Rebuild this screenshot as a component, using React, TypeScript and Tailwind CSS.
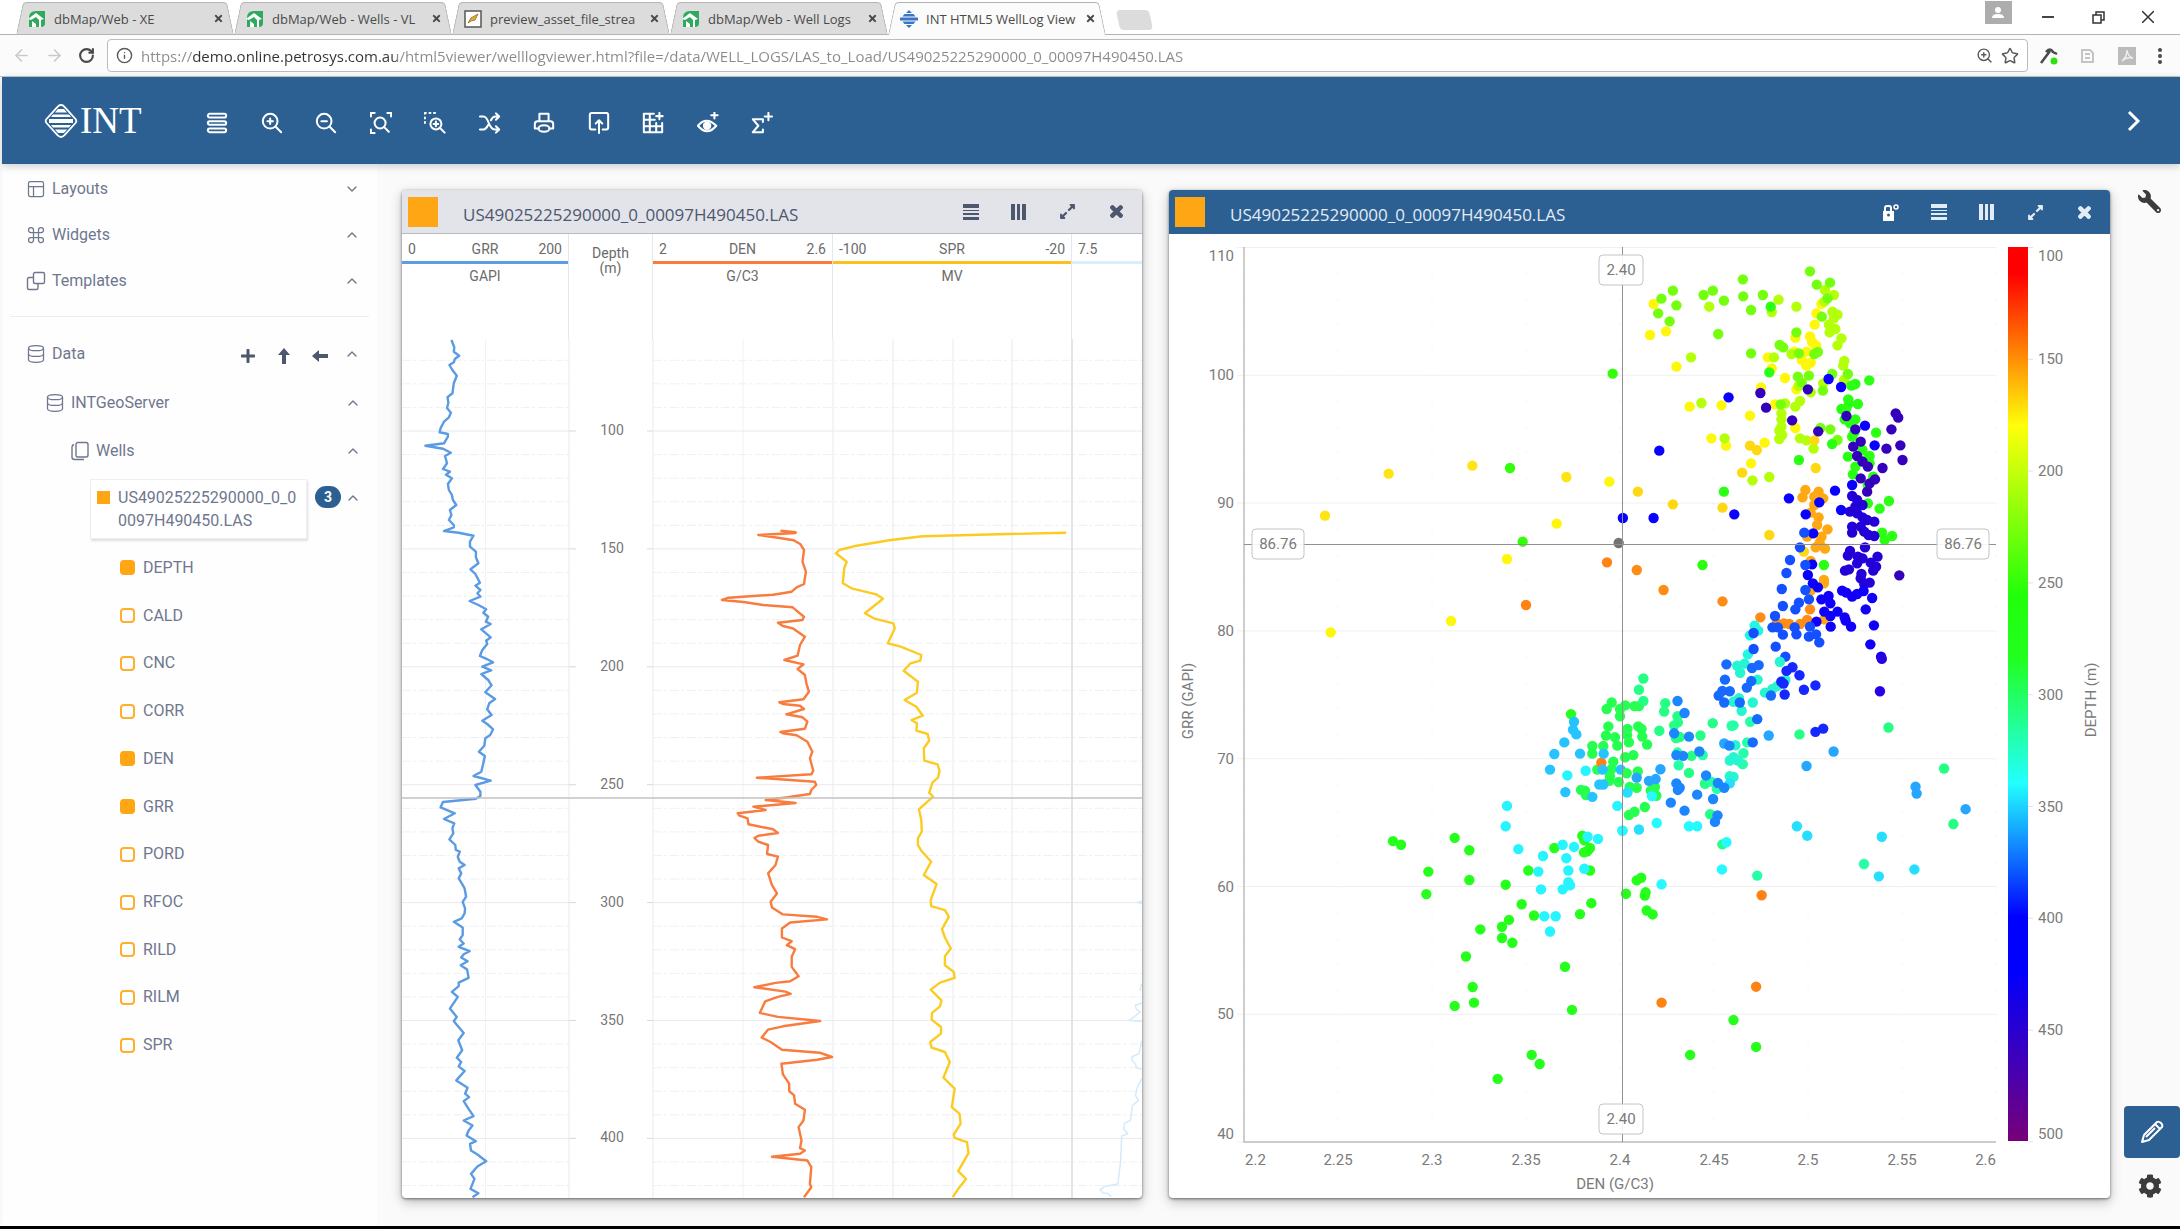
import React, { useState } from "react";
import { ChevronDown, ChevronUp, Command, Database, PanelsTopLeft, Info, ArrowLeft, ArrowRight, RotateCw, ZoomIn, Star } from "lucide-react";
import { FaPlus, FaTimes, FaExpandAlt, FaWrench, FaCog } from "react-icons/fa";

const WELL = "US49025225290000_0_00097H490450.LAS";
const URL_TEXT = "https://demo.online.petrosys.com.au/html5viewer/welllogviewer.html?file=/data/WELL_LOGS/LAS_to_Load/US49025225290000_0_00097H490450.LAS";

/* ---------- digitised data ---------- */

// A tile holds points in its own units, placed on the chart by origin and scale
interface Tile {
  ox: number;
  oy: number;
  sx: number;
  sy: number;
}

const LOG_TOP: Tile = { ox: -12, oy: -159, sx: 2.0364, sy: 3 };
const LOG_MID: Tile = { ox: -12, oy: 161, sx: 2.0364, sy: 3 };
const LOG_END: Tile = { ox: -12, oy: 511, sx: 2.0364, sy: 2.995 };

const place = (tile: Tile, points: string): [number, number][] =>
  points.split(" ").map((p) => {
    const [x, y] = p.split(",").map(Number);
    return [x / tile.sx + tile.ox, y / tile.sy + tile.oy];
  });

const curve = (...parts: [Tile, string][]) =>
  parts
    .flatMap(([tile, points]) => place(tile, points))
    .map(([x, y]) => `${x.toFixed(1)},${y.toFixed(1)}`)
    .join(" ");

const GRR = curve(
  [LOG_TOP, "125,480 131,502 130,515 141,527 132,537 130,547 121,555 127,570 136,587 130,610 127,640 117,652 119,668 116,684 124,698 120,712 110,725 103,745 101,757 118,762 118,770 110,790 72,797 108,806 124,818 112,828 116,850 108,867 122,875 114,884 126,895 118,912 120,930 126,945 128,960 135,975 122,990 125,1005 120,1020 130,1035 130,1042"],
  [LOG_MID, "110,93 140,98 170,107 163,125 163,140 175,155 175,172 180,190 164,208 174,222 183,248 174,257 184,270 178,280 184,290 162,303 180,315 196,328 190,338 200,350 195,365 205,372 186,388 205,412 196,422 198,432 188,450 183,468 194,475 210,487 188,500 206,511 186,522 200,540 207,556 194,577 214,597 202,610 198,628 207,645 188,662 198,672 210,688 204,705 194,715 192,737 181,755 193,768 190,790 186,815 170,828 205,842 174,855 184,875 184,888 175,896 108,906 103,922 132,940 110,957 131,970 127,985 129,1000 121,1018 133,1035 134,1050"],
  [LOG_END, "142,5 138,20 142,35 152,45 140,55 145,70 140,85 147,102 152,115 155,140 148,155 153,175 152,190 146,205 130,215 148,232 148,255 142,268 150,280 140,290 162,303 150,312 145,322 158,333 144,345 157,358 160,383 140,397 140,408 126,425 138,440 130,458 122,475 136,500 130,513 150,548 139,570 143,585 147,600 136,622 145,635 140,648 152,662 135,690 158,712 153,730 161,740 150,752 160,775 170,797 150,810 168,825 160,840 156,855 175,872 163,880 165,900 178,912 196,932 178,948 165,970 172,985 168,1000 164,1015 180,1028 168,1040"]
);

const DEN = curve(
  [LOG_MID, "795,92 826,97 826,99 750,105 790,113 822,121 836,133 843,150 840,185 847,215 843,252 828,262 818,275 780,284 690,293 676,300 720,306 760,315 820,322 832,337 843,350 840,360 790,368 800,378 820,385 845,410 835,435 830,467 803,480 842,493 830,507 845,525 848,550 853,575 842,598 793,607 800,612 835,617 843,627 807,643 840,652 850,665 845,686 795,696 800,700 828,706 850,725 860,755 855,775 862,812 858,823 747,833 865,845 868,855 858,870 855,882 810,892 765,900 826,909 740,920 765,930 708,940 712,947 728,955 730,973 780,988 790,999 750,1007 742,1014 750,1025 770,1035 768,1060"],
  [LOG_END, "768,12 790,20 785,45 770,70 778,105 788,130 775,155 778,172 800,193 870,200 890,208 815,217 798,235 798,262 818,273 808,285 825,297 818,320 818,350 832,378 815,393 785,398 742,411 805,424 816,431 790,440 764,453 753,488 790,500 876,512 800,528 770,538 757,562 775,575 798,598 875,607 900,620 870,628 797,640 800,672 813,700 813,722 823,735 825,760 845,778 842,810 832,830 838,870 835,893 845,900 835,910 778,919 850,930 858,950 855,1000 858,1010 843,1040"]
);

const SPR = curve(
  [LOG_MID, "1377,98 1200,104 1085,109 1020,120 950,137 915,150 908,160 930,185 925,205 922,250 940,265 990,283 1004,296 967,340 985,355 1025,370 1028,385 1014,430 1040,440 1082,465 1080,482 1060,490 1046,512 1075,545 1073,578 1048,600 1072,620 1085,647 1062,660 1073,670 1072,692 1095,702 1098,722 1087,745 1088,782 1115,793 1119,812 1116,833 1105,847 1098,878 1106,890 1077,928 1082,960 1083,995 1075,1015 1075,1035"],
  [LOG_END, "1082,2 1102,35 1087,75 1113,102 1101,150 1102,168 1130,180 1138,200 1124,237 1130,262 1142,295 1130,318 1130,345 1148,365 1150,383 1120,397 1101,418 1123,450 1120,468 1104,488 1103,508 1122,530 1122,550 1100,575 1103,592 1130,605 1140,635 1127,682 1150,715 1144,770 1160,790 1162,820 1148,852 1150,862 1175,875 1178,908 1157,962 1173,985 1158,1013 1146,1040"]
);

const PORD = [
  curve([LOG_END, "1531,153 1522,157 1531,161"]),
  curve([LOG_END, "1531,400 1527,422"]),
  curve([LOG_END, "1531,458 1518,465 1520,478 1528,485 1515,500 1505,510 1531,514"]),
  curve([LOG_END, "1531,572 1525,610 1510,620 1512,632 1518,640 1520,652 1531,657"]),
  curve([LOG_END, "1531,685 1522,710 1518,735 1524,750 1512,765 1508,810 1496,818 1494,835 1502,850 1490,857 1488,930 1482,1000 1455,1008 1446,1018 1452,1027 1462,1029 1468,1038"]),
];

const SCATTER: { tile: Tile; dots: [string, string][] }[] = [
  {
    tile: { ox: -9, oy: -4, sx: 3, sy: 3 },
    dots: [
      ["#ffe414", "495,857 686,731 937,707 1219,741"],
      ["#fff70a", "1348,755 1190,881 1041,987 873,1173 512,1207"],
      ["#33ff0d", "1358,431 1050,714 1088,935"],
      ["#ff8314", "1341,997 1098,1125"],
      ["#6f756f", "1376,939"],
    ],
  },
  {
    tile: { ox: 431, oy: -4, sx: 2.8, sy: 3 },
    dots: [
      ["#fff70a", "150,222 185,304 140,315 214,410 470,382 481,415 518,444 550,478 451,472 251,530 340,526 420,557 312,625 353,647 461,638 547,594 423,700 606,250 601,284 620,222 588,319 547,323 594,336 605,346 579,365 545,365 565,390 590,398 578,407 490,523"],
      ["#b4ff0a", "306,230 500,209 481,246 550,230 255,382 487,382 284,519 651,245 665,254 655,265 641,284 659,297 643,307 676,325 665,346 684,393 681,407 683,450 625,460 536,372 560,513 547,530 590,487 518,520 508,550 508,568 508,590 502,602 510,615 502,627 560,625 578,631 598,656 349,625 427,751 474,741 556,468 630,180 655,195 628,215"],
      ["#73ff0d", "588,124 400,148 204,182 172,206 214,226 316,182 290,195 401,199 456,195 347,212 163,250 195,274 423,240 331,312 607,164 644,158 637,205 621,260 550,307 503,345 513,352 423,370 557,370 600,372 610,366 554,440 565,458 585,437 650,432 624,482 645,598 617,594 665,630 506,523 694,432"],
      ["#ffd814", "420,647 439,660 398,728 106,785 204,823 343,833 474,915 600,631 604,714 571,965"],
      ["#ffa814", "575,780 567,802 612,785 625,805 600,800 600,825 590,848 612,862 608,885 637,898 620,920 580,920 604,952 630,956 615,938 590,993 627,1050 627,1060 590,1082 628,1168"],
      ["#ff8c14", "103,1020 178,1080 343,1114 449,1162 588,1138 495,1180 515,1180 530,1182 560,1182 580,1170"],
      ["#2bff14", "754,451 773,608 715,462 704,467 695,508 722,522 676,537 697,520 690,535 715,568 685,568 700,580 712,608 706,620 650,642 735,660 755,678 694,680 745,690 755,700 715,710 708,733 765,740 750,765 557,690 347,785 809,813 783,836 790,908 818,918 797,930 627,1005 287,1005 478,230 474,427 750,820"],
      ["#3500bb", "449,489 465,533 538,571 582,478 611,604 690,558 715,598 828,550 835,563 816,598 841,646 802,656 847,690 791,714 730,635 709,650 720,678 735,695 750,710 730,745 770,748 755,760 748,785 838,1036"],
      ["#0a00ff", "360,502 166,662 64,864 150,864 376,853 529,805 658,782 614,817 576,853 675,840 706,765 640,447 675,471 597,910 742,587 769,646 582,1035 594,1003 596,1060 610,1072"],
      ["#2400d8", "706,798 720,810 735,825 715,830 700,845 720,850 735,862 748,870 768,875 706,890 706,908 730,890 740,905 752,915 768,918 742,952 700,963 694,977 722,980 735,985 720,1000 777,980 758,998 773,1010 765,1022 686,1022 697,1018 732,1032 730,1045 755,1058 740,1062"],
      ["#1000fa", "678,1082 690,1088 706,1100 720,1092 738,1083 762,1104 744,1138 767,1186 757,1243 787,1280 640,1098 620,1108 645,1120 628,1145 665,1145 645,1158 685,1162 688,1172 703,1190 646,1190 606,1175"],
      ["#23f5e0", "433,1187 443,1202 420,1216 414,1273"],
      ["#1450ff", "572,908 560,952 532,990 575,1005 522,1029 509,1077 575,1080 585,1108 557,1118 547,1138 512,1128 490,1158 483,1192 498,1192 512,1214 545,1192 550,1213 588,1190 585,1220 605,1213 614,1237 492,1250 519,1280 430,1209 430,1257"],
    ],
  },
  {
    tile: { ox: -9, oy: 426, sx: 3, sy: 2.755 },
    dots: [
      ["#26ff50", "1297,237 1297,258 1263,358 1275,360 1278,372 1330,237 1355,117 1340,135 1345,183 1338,208 1365,213 1372,236 1380,155 1380,135 1360,280 1350,320 1348,333 1376,336 1312,302 1355,300"],
      ["#26ff1c", "699,499 723,509 884,490 928,524 928,606 805,583 799,645 1037,619 1105,580 1085,673 1122,704 1047,716 1026,735 1026,766 1057,779 961,742 918,817 938,901 942,944 884,953 1215,845 1236,964 1115,1088 1139,1113 1013,1154 1294,670 1260,700 1233,149 1183,518 1267,484 1273,497 1290,518 1272,530 1290,580 1282,527"],
      ["#ff8314", "1324,283"],
      ["#26c4ff", "1242,170 1239,192 1249,205 1213,227 1183,259 1170,302 1216,364 1297,377 1260,258 1331,258 1328,302 1318,343 1330,343 1382,302"],
      ["#26f4ff", "1222,318 1277,305 1041,402 1037,458 1075,521 1372,402 1387,470 1314,493 1149,540 1135,583 1143,632 1219,546 1225,580 1242,515 1208,509 1283,487 1273,575 1225,612 1230,621 1208,632 1153,706 1187,706 1170,748"],
    ],
  },
  {
    tile: { ox: 431, oy: 426, sx: 2.697, sy: 2.755 },
    dots: [
      ["#26ff50", "68,125 93,127 105,127 74,190 73,207 78,227 103,183 112,190 114,211 127,233 68,268 90,262 72,312 102,307 80,350 99,352 137,360 152,374 148,350 121,405 93,418 78,427"],
      ["#26ff85", "117,51 105,82 117,113 176,119 173,142 209,155 210,172 200,180 215,212 205,215 160,195 271,208 304,174 538,205 928,299 953,452 778,186 247,264 240,311 290,335 283,341 297,425 330,508"],
      ["#26ffa8", "355,181 360,180 405,170 397,227 387,257 385,287 712,562 424,594 277,262 212,290 209,255 315,355 300,335"],
      ["#26f5cf", "370,16 390,10 378,35 425,54 500,55 445,90 465,80 478,72 375,105 412,117 382,140 360,115 485,5 365,235 360,268 350,277 372,277 350,320 360,322"],
      ["#26ff1c", "70,644 99,607 111,600 123,640 121,649 126,690 142,701 243,1088 360,992 421,1066"],
      ["#26f9ff", "61,470 153,449 140,375 240,458 262,458 341,502 329,577 166,618"],
      ["#26dfff", "105,467 531,458 559,484 760,487 848,577 752,596 350,340 74,365"],
      ["#26a6ff", "99,324 163,301 132,333 150,328 455,208 557,292 630,252 851,349 854,368 986,411 335,230"],
      ["#1c86ff", "209,113 228,146 200,202 240,211 206,262 224,264 268,252 349,236 286,318 206,340 215,352 210,358 262,371 305,383 191,393 228,415 318,339 335,352 317,428 310,446"],
      ["#176aff", "341,12 337,54 428,14 410,22 408,58 396,76 461,98 330,85 350,86 320,98 335,117 377,117 424,163 412,227"],
      ["#1428ff", "519,20 503,30 538,42 550,82 581,70 489,60 495,65 498,95 581,198 602,189"],
      ["#2a00e6", "755,86 760,-3"],
      ["#ff8314", "436,648 421,900 166,944"],
    ],
  },
];

/* ---------- icons ---------- */

const Icon = ({ children, size = 24 }: { children: React.ReactNode; size?: number }) => (
  <svg width={size} height={size} viewBox="0 0 24 24" fill="none" stroke="currentColor" strokeWidth="2.2" strokeLinecap="round" strokeLinejoin="round">
    {children}
  </svg>
);

const Logo = () => (
  <svg width="34" height="34" viewBox="0 0 34 34" fill="none">
    <path d="M17 1q2 0 3.500 1.800L31.500 15q1.600 2 0 4L20.500 31.200q-3.500 3.600-7 0L2.500 19q-1.600-2 0-4L13.500 2.800Q15 1 17 1z" stroke="#fff" strokeWidth="1.800" />
    <path d="M14 5h6l3 3.500H11zM9 10.500h16l2 2.500H7zM5 15h24v4H5zM7 21h20l-2 2.500H9zM11 25.500h12L20 29h-6z" fill="#fff" />
  </svg>
);

const LeafIcon = () => (
  <svg width="18" height="18" viewBox="0 0 18 18">
    <path d="M1 8q0-7 7-7h9v12q0 4-4 4H1z" fill="#2faa5c" />
    <path d="M0 9 8 3l8 6-3 1v7h-2v-7L8 7l-5 3z" fill="#fff" />
    <path d="M4 17v-6l4 3v3z" fill="#fff" />
  </svg>
);

const FileIcon = () => (
  <svg width="18" height="18" viewBox="0 0 18 18">
    <rect x="1" y="1" width="16" height="16" fill="#fff" stroke="#555" strokeWidth="1.5" />
    <path d="m4 13 3-5 7-4-3 6-4 1z" fill="#e0a840" stroke="#a87a30" />
  </svg>
);

const IntIcon = () => (
  <svg width="18" height="18" viewBox="0 0 18 18">
    <path d="M9 0l3 3H6zM4.500 4h9l2 2.500h-13zM0 7.500h18v3H0zM2.500 11.500h13l-2 2.500h-9zM6 15h6l-3 3z" fill="#3a74c4" />
  </svg>
);

const RowsIcon = () => (
  <svg width="16" height="16" viewBox="0 0 16 16" fill="currentColor">
    <path d="M0 0h16v4H0zM0 6h16v1H0zM0 9h16v2H0zM0 13h16v3H0z" />
  </svg>
);

const ColsIcon = () => (
  <svg width="16" height="16" viewBox="0 0 16 16" fill="currentColor">
    <path d="M0 0h4v16H0zM6 0h3v16H6zM11 0h4v16h-4z" />
  </svg>
);

const BlockArrow = ({ className }: { className?: string }) => (
  <svg width="16" height="16" viewBox="0 0 16 16" fill="currentColor" className={className}>
    <path d="m8 0 6 7h-4v9H6V7H2z" />
  </svg>
);

const TOOLS: [string, React.ReactNode][] = [
  ["Menu", <><rect x="2" y="2" width="20" height="4" rx="2" /><rect x="2" y="10" width="20" height="4" rx="2" /><rect x="2" y="18" width="20" height="4" rx="2" /></>],
  ["Zoom in", <><circle cx="10" cy="10" r="8" /><path d="m16 16 6 6M10 7v6M7 10h6" /></>],
  ["Zoom out", <><circle cx="10" cy="10" r="8" /><path d="m16 16 6 6M7 10h6" /></>],
  ["Zoom to fit", <><circle cx="11" cy="12" r="6" /><path d="m15.500 16.500 5 5M1 5V1h4M19 1h4v4M1 19v4h4" /></>],
  ["Zoom to area", <><path d="M1 1h14M1 1v11" strokeDasharray="1 4" /><circle cx="13" cy="13" r="6" /><path d="m17.500 17.500 5 5M13 10.500v5M10.500 13h5" /></>],
  ["Shuffle", <><path d="M1 5h4c6 0 5 14 12 14h4M1 19h4c3 0 4-3 5-5M13 9c1-2 2-4 5-4h3M18.500 1.500 22 5l-3.500 3.500M18.500 15.500 22 19l-3.500 3.500" /></>],
  ["Print", <><path d="M7 10V2h10v8M6 18H2v-5q0-3 3-3h14q3 0 3 3v5h-4" /><ellipse cx="12" cy="18" rx="6" ry="3.500" /></>],
  ["Export", <><path d="M8 19H4q-2 0-2-2V3q0-2 2-2h16q2 0 2 2v14q0 2-2 2h-4M12 23V10M8.500 12.500 12 9l3.500 3.500" /></>],
  ["Add grid", <><path d="M13 2H2v20h20V12M2 8.500h12M2 15.500h20M8.500 2v20M15.500 12v10M19 1v7M15.500 4.500h7" /></>],
  ["Add view", <><path d="M1 15q9-11 20 0-10 12-20 0z" /><circle cx="11" cy="15" r="3.500" fill="currentColor" /><path d="M19 0v7M15.500 3.500h7" /></>],
  ["Add function", <><path d="M13 11V8H2l6 7-6 7h11v-3M19 1v8M15 5h8" /></>],
];

/* ---------- browser ---------- */

const TABS = [
  { title: "dbMap/Web - XE", icon: <LeafIcon /> },
  { title: "dbMap/Web - Wells - VL", icon: <LeafIcon /> },
  { title: "preview_asset_file_strea", icon: <FileIcon /> },
  { title: "dbMap/Web - Well Logs", icon: <LeafIcon /> },
  { title: "INT HTML5 WellLog View", icon: <IntIcon />, active: true },
];

function BrowserBar() {
  return (
    <div className="bg-white font-['Open_Sans',sans-serif] text-[#4a4a4a]">
      <div className="flex h-[35px] items-end border-b border-[#b4b4b4] pl-4">
        {TABS.map((t) => (
          <div key={t.title} className="relative -mb-px flex h-[33px] w-[218px] items-center gap-2 pr-2 pl-3">
            <span className={`absolute inset-y-0 left-0 w-1/2 origin-bottom -skew-x-12 rounded-tl border-t border-l border-[#b4b4b4] ${t.active ? "bg-[#fbfbfb]" : "border-b bg-[#dcdcdc]"}`} />
            <span className={`absolute inset-y-0 right-0 w-1/2 origin-bottom skew-x-12 rounded-tr border-t border-r border-[#b4b4b4] ${t.active ? "bg-[#fbfbfb]" : "border-b bg-[#dcdcdc]"}`} />
            <span className="relative shrink-0">{t.icon}</span>
            <span className="relative min-w-0 flex-1 text-[13px] leading-5 whitespace-nowrap">{t.title}</span>
            <button aria-label="Close tab" className="relative shrink-0 pr-[2px]">
              <FaTimes size={11} />
            </button>
          </div>
        ))}
        <button aria-label="New tab" className="mb-1 ml-3 h-5 w-[33px] skew-x-12 rounded-sm bg-[#dcdcdc]" />
        <div className="ml-auto flex h-[33px] items-start gap-[34px] pr-6">
          <span className="flex w-4 justify-center">
            <span className="flex h-[23px] w-[27px] shrink-0 items-center justify-center bg-[#adadad]">
              <svg width="12" height="12" viewBox="0 0 12 12" fill="#fff"><circle cx="6" cy="3" r="3" /><path d="M0 11q0-4 6-4t6 4z" /></svg>
            </span>
          </span>
          <button aria-label="Minimise" className="flex h-8 w-4 items-center justify-center"><span className="h-[2px] w-3 bg-[#444]" /></button>
          <button aria-label="Restore" className="flex h-8 w-4 items-center justify-center">
            <svg width="13" height="13" viewBox="0 0 13 13" fill="none" stroke="#333" strokeWidth="1.500"><path d="M1 4h8v8H1zM4 4V1h8v8H9" /></svg>
          </button>
          <button aria-label="Close" className="flex h-8 w-4 items-center justify-center">
            <svg width="12" height="12" viewBox="0 0 12 12" stroke="#333" strokeWidth="1.500"><path d="m0 0 12 12M12 0 0 12" /></svg>
          </button>
        </div>
      </div>
      <div className="flex h-[42px] items-center border-b border-[#c9c9c9] bg-[#fbfbfb] pr-3 pl-3">
        <div className="flex w-[95px] items-center gap-[14px] text-[#c9c9c9]">
          <button aria-label="Back"><ArrowLeft size={19} /></button>
          <button aria-label="Forward"><ArrowRight size={19} /></button>
          <button aria-label="Reload" className="text-[#4a4a4a]"><RotateCw size={17} strokeWidth={3} /></button>
        </div>
        <div className="flex h-[33px] min-w-0 flex-1 items-center gap-2 rounded border border-[#bcbcbc] bg-white pr-2 pl-2">
          <Info size={17} className="shrink-0 text-[#5a5a5a]" />
          <input
            aria-label="Address"
            defaultValue={URL_TEXT}
            className="min-w-0 flex-1 bg-[linear-gradient(90deg,#8a8a8a_52px,#333_52px,#333_256px,#8a8a8a_256px)] bg-clip-text text-[15px] leading-6 text-transparent outline-none"
          />
          <ZoomIn size={17} className="shrink-0 text-[#5a5a5a]" />
          <Star size={18} className="shrink-0 text-[#5a5a5a]" />
        </div>
        <div className="flex w-[140px] shrink-0 items-center justify-between pr-[6px] pl-3">
          <svg width="18" height="18" viewBox="0 0 18 18" fill="none"><path d="M1 16 10 4M6 5q4-5 7 0l4 2" stroke="#4a4a4a" strokeWidth="2.500" /><circle cx="14" cy="14" r="3.500" fill="#30e010" /></svg>
          <svg width="15" height="14" viewBox="0 0 15 14" fill="none" stroke="#c4c4c4" strokeWidth="2"><path d="M2 1h8l3 3v9H2zM5 5h5M5 9h5" /></svg>
          <svg width="18" height="18" viewBox="0 0 18 18"><rect width="18" height="18" fill="#bcbcbc" /><path d="M4 14q5-4 5-11 1 7 6 8-7-1-11 3z" fill="none" stroke="#eee" strokeWidth="1.500" /></svg>
          <svg width="4" height="18" viewBox="0 0 4 18" fill="#4a4a4a"><circle cx="2" cy="3" r="2" /><circle cx="2" cy="9" r="2" /><circle cx="2" cy="15" r="2" /></svg>
        </div>
      </div>
    </div>
  );
}

/* ---------- sidebar ---------- */

const MENU: [string, React.ReactNode, boolean][] = [
  ["Layouts", <PanelsTopLeft size={20} strokeWidth={1.5} />, false],
  ["Widgets", <Command size={20} strokeWidth={1.5} />, true],
  ["Templates", <svg width="20" height="20" viewBox="0 0 20 20" fill="none" stroke="currentColor" strokeWidth="1.400"><rect x="7.500" y="1.500" width="11" height="11" rx="1.500" /><path d="M7.500 6.500H3Q1.500 6.500 1.500 8v9q0 1.500 1.500 1.500h7.500q1.500 0 1.500-1.500v-4.500" /></svg>, true],
];

const CURVES = ["DEPTH", "CALD", "CNC", "CORR", "DEN", "GRR", "PORD", "RFOC", "RILD", "RILM", "SPR"];

function Sidebar() {
  const [shown, setShown] = useState(["DEPTH", "DEN", "GRR"]);
  const toggle = (c: string) => setShown((s) => (s.includes(c) ? s.filter((x) => x !== c) : [...s, c]));

  return (
    <nav className="w-[375px] shrink-0 bg-[#fefefe] text-[16px] text-[#6f778e] shadow-[2px_0_6px_rgba(0,0,0,0.18)]">
      {MENU.map(([label, icon, open]) => (
        <button key={label} className="flex h-[46px] w-full items-center gap-[6px] pr-[17px] pl-6 text-left first:mt-[2px]">
          {icon}
          <span className="flex-1">{label}</span>
          {open ? <ChevronUp size={16} /> : <ChevronDown size={16} />}
        </button>
      ))}
      <hr className="mx-2 mt-3 border-[#e9edf4]" />
      <div className="mt-[14px] flex h-[46px] items-center gap-[6px] pr-[17px] pl-6">
        <Database size={20} strokeWidth={1.5} />
        <span className="flex-1">Data</span>
        <div className="mr-[10px] flex items-center gap-5 pt-1 text-[#4d576e]">
          <button aria-label="Add"><FaPlus size={16} /></button>
          <button aria-label="Upload"><BlockArrow /></button>
          <button aria-label="Back"><BlockArrow className="-rotate-90" /></button>
        </div>
        <ChevronUp size={16} />
      </div>
      <button className="mt-[2px] flex h-[48px] w-full items-center gap-[6px] pr-4 pl-[43px] text-left">
        <Database size={20} strokeWidth={1.5} />
        <span className="flex-1">INTGeoServer</span>
        <ChevronUp size={16} />
      </button>
      <button className="flex h-[48px] w-full items-center gap-[6px] pr-4 pl-[68px] text-left">
        <svg width="20" height="20" viewBox="0 0 20 20" fill="none" stroke="currentColor" strokeWidth="1.400"><rect x="6" y="1.500" width="12" height="14.500" rx="2" /><path d="M4 3.500q-2 .5-2 2.500v10q0 2.500 2.500 2.500H14" /></svg>
        <span className="flex-1">Wells</span>
        <ChevronUp size={16} />
      </button>
      <div className="mt-1 flex items-start pr-4 pl-[88px]">
        <button className="flex w-[217px] gap-2 border border-[#efefef] bg-white py-[6px] pl-[6px] text-left leading-[23px] shadow-[1px_2px_2px_rgba(0,0,0,0.12)]">
          <span className="mt-[5px] size-[13px] shrink-0 bg-[#ffa614]" />
          <span className="w-[184px] break-all">{WELL}</span>
        </button>
        <span className="mt-[7px] ml-2 flex h-[22px] w-[26px] items-center justify-center rounded-full bg-[#2d6092] text-[14px] font-bold text-white">3</span>
        <ChevronUp size={16} className="mt-[11px] ml-auto" />
      </div>
      <div className="mt-[5px] flex h-[525px] flex-col pl-[118px]">
        {CURVES.map((c) => (
          <label key={c} className="flex flex-1 items-center gap-2">
            <input
              type="checkbox"
              checked={shown.includes(c)}
              onChange={() => toggle(c)}
              className="size-[15px] appearance-none rounded-[4px] border-2 border-[#ffae2e] bg-white checked:border-[#ffa614] checked:bg-[#ffa614]"
            />
            {c}
          </label>
        ))}
      </div>
    </nav>
  );
}

/* ---------- panels ---------- */

function Panel({ active, children }: { active?: boolean; children: React.ReactNode }) {
  return (
    <section className="min-w-0 overflow-hidden rounded-[4px] bg-white shadow-[0_1px_3px_rgba(0,0,0,0.5),0_4px_12px_rgba(0,0,0,0.25)]">
      <header className={`flex h-[44px] items-center pl-[6px] ${active ? "bg-[#2d6092] text-[#e3ebf4]" : "border-b border-[#b9bbc0] bg-[#e3e4ea] text-[#4d576e]"}`}>
        <span className="size-[30px] shrink-0 bg-[#ffa614]" />
        <h2 className="ml-[25px] flex-1 truncate pt-[6px] font-['Open_Sans',sans-serif] text-[17px]">{WELL}</h2>
        <div className="flex items-center gap-8 pr-[17px]">
          {active && (
            <button aria-label="Unlock" className="text-white">
              <svg width="17" height="17" viewBox="0 0 17 17" fill="none"><path d="M1 7h11v10H1z" fill="currentColor" /><path d="M3 7V4q0-2 2-2h2q2 0 2 2v3" stroke="currentColor" strokeWidth="2" /><circle cx="14" cy="3" r="2" stroke="currentColor" strokeWidth="1.500" /><circle cx="6.500" cy="11" r="1.500" fill="#2d6092" /></svg>
            </button>
          )}
          <button aria-label="Rows"><RowsIcon /></button>
          <button aria-label="Columns"><ColsIcon /></button>
          <button aria-label="Expand"><FaExpandAlt size={17} /></button>
          <button aria-label="Close panel"><FaTimes size={17} stroke="currentColor" strokeWidth={40} /></button>
        </div>
      </header>
      {children}
    </section>
  );
}

function TrackHead({ min, name, max, unit, line }: { min: string; name?: string; max?: string; unit?: string; line: string }) {
  return (
    <div className="border-r border-[#e6e7ee] last:border-r-0">
      <div className={`grid h-[30px] grid-cols-3 items-center border-b-3 px-[6px] pt-1 ${line}`}>
        <span>{min}</span>
        <span className="text-center">{name}</span>
        <span className="text-right">{max}</span>
      </div>
      <div className="pt-[2px] text-center leading-5">{unit}</div>
    </div>
  );
}

function LogView() {
  const depthY = (d: number) => 92 + (d - 100) * 2.358;
  const tens = Array.from({ length: 36 }, (_, i) => 70 + i * 10);
  const fifties = [100, 150, 200, 250, 300, 350, 400];

  return (
    <>
      <div className="grid h-[105px] grid-cols-[167fr_84fr_180fr_239fr_70fr] text-[14px] text-[#6b6b6b]">
        <TrackHead min="0" name="GRR" max="200" unit="GAPI" line="border-[#5b9ee6]" />
        <div className="border-r border-[#e6e7ee] pt-3 text-center leading-[15px]">
          Depth
          <br />
          (m)
        </div>
        <TrackHead min="2" name="DEN" max="2.6" unit="G/C3" line="border-[#f97b3d]" />
        <TrackHead min="-100" name="SPR" max="-20" unit="MV" line="border-[#fcc21b]" />
        <TrackHead min="7.5" line="border-[#d9eefb]" />
      </div>
      <svg viewBox="0 0 740 859" className="block h-auto w-full font-['Roboto',sans-serif] text-[14px]">
        {/* grid */}
        <g stroke="#e8eaee" strokeWidth="1">
          {tens.map((d) => (
            <g key={d} strokeOpacity={d % 50 === 0 ? 1 : 0.7}>
              <path d={`M0 ${depthY(d)}H167M251 ${depthY(d)}H740`} strokeDasharray={d % 50 === 0 ? undefined : "9 2 3 3"} />
            </g>
          ))}
          <path d="M83.500 0V859M341 0V859" strokeOpacity="0.6" />
          <path d="M167 0V859M251 0V859M431 0V859M491 0V859M551 0V859M610 0V859" />
          <path d="M670 0V859" stroke="#e3e4ea" strokeWidth="2" />
        </g>
        <g stroke="#d5d8de">
          {fifties.map((d) => (
            <path key={d} d={`M167 ${depthY(d)}h7M245 ${depthY(d)}h6`} />
          ))}
        </g>
        <g fill="#777" textAnchor="middle">
          {fifties.map((d) => (
            <text key={d} x="210" y={depthY(d) + 4}>{d}</text>
          ))}
        </g>
        {/* curves */}
        <g fill="none" strokeWidth="2.4" strokeLinejoin="round">
          <polyline points={GRR} stroke="#5a9be3" />
          <polyline points={DEN} stroke="#f97b3d" />
          <polyline points={SPR} stroke="#fccb22" />
          {PORD.map((p) => (
            <polyline key={p} points={p} stroke="#d3ebfb" strokeWidth="1.5" />
          ))}
        </g>
        <path d="M0 459H740" stroke="#c2c2c2" strokeWidth="1.5" />
      </svg>
    </>
  );
}

const X_TICKS = ["2.2", "2.25", "2.3", "2.35", "2.4", "2.45", "2.5", "2.55", "2.6"];
const Y_TICKS = [110, 100, 90, 80, 70, 60, 50, 40];
const DEPTH_TICKS = [100, 150, 200, 250, 300, 350, 400, 450, 500];

function CrossLabel({ x, y, w, text }: { x: number; y: number; w: number; text: string }) {
  return (
    <g>
      <rect x={x - w / 2} y={y - 15} width={w} height="30" rx="4" fill="#fff" fillOpacity="0.9" stroke="#c4c4c4" />
      <text x={x} y={y + 5} textAnchor="middle">{text}</text>
    </g>
  );
}

function CrossPlot() {
  const gridY = (i: number) => 13.5 + i * 127.8;
  const scaleY = (i: number) => 13.5 + i * 111.8;

  return (
    <svg viewBox="0 0 941 964" className="block h-auto w-full font-['Roboto',sans-serif] text-[15px]" fill="#7a7a7a">
      <defs>
        <linearGradient id="depth" x1="0" y1="0" x2="0" y2="1">
          <stop offset="0.03" stopColor="#ff0000" />
          <stop offset="0.2" stopColor="#ffff0a" />
          <stop offset="0.39" stopColor="#22ff0a" />
          <stop offset="0.46" stopColor="#22ff20" />
          <stop offset="0.6" stopColor="#22ffff" />
          <stop offset="0.75" stopColor="#0000ff" />
          <stop offset="0.81" stopColor="#0000ff" />
          <stop offset="1" stopColor="#780078" />
        </linearGradient>
      </defs>
      {/* grid */}
      <g stroke="#f0f0f2">
        {Y_TICKS.map((v, i) => (
          <path key={v} d={`M68 ${gridY(i)}H827`} />
        ))}
        {X_TICKS.map((v, i) => (
          <path key={v} d={`M${75 + i * 94} 13V908`} strokeDasharray="2 23.6" />
        ))}
      </g>
      <path d="M75 13V908H827" fill="none" stroke="#bdbdbd" strokeWidth="1.5" />
      {Y_TICKS.map((v, i) => (
        <text key={v} x="65" y={i === 0 ? 27 : i === 7 ? 905 : gridY(i) + 5} textAnchor="end">{v}</text>
      ))}
      {X_TICKS.map((v, i) => (
        <text key={v} x={i === 0 ? 76 : i === 8 ? 827 : 75 + i * 94} y="931" textAnchor={i === 0 ? "start" : i === 8 ? "end" : "middle"}>{v}</text>
      ))}
      <g textAnchor="middle">
        <text x="446" y="955">DEN (G/C3)</text>
        <text transform="translate(24 467) rotate(-90)">GRR (GAPI)</text>
        <text transform="translate(927 466) rotate(-90)">DEPTH (m)</text>
      </g>
      {/* points */}
      {SCATTER.map(({ tile, dots }) =>
        dots.map(([color, points]) => (
          <g key={`${tile.ox}-${tile.oy}-${color}`} fill={color}>
            {place(tile, points).map(([x, y], i) => (
              <circle key={i} cx={x} cy={y} r="5.2" />
            ))}
          </g>
        ))
      )}
      {/* cursor */}
      <path d="M453.500 13V908M75 310.500H827" fill="none" stroke="#909090" />
      <CrossLabel x={452} y={36} w={44} text="2.40" />
      <CrossLabel x={452} y={885} w={44} text="2.40" />
      <CrossLabel x={109} y={310} w={52} text="86.76" />
      <CrossLabel x={794} y={310} w={52} text="86.76" />
      {/* depth scale */}
      <rect x="839" y="13" width="20" height="894" fill="url(#depth)" />
      {DEPTH_TICKS.map((v, i) => (
        <g key={v}>
          <path d={`M859 ${scaleY(i)}h5`} stroke="#e2e2e2" />
          <text x="869" y={i === 0 ? 27 : i === 8 ? 905 : scaleY(i) + 5}>{v}</text>
        </g>
      ))}
    </svg>
  );
}

export default function App() {
  return (
    <div className="flex min-h-screen flex-col border-b-3 border-black bg-white font-['Roboto',sans-serif]">
      <BrowserBar />
      <div className="flex flex-1 flex-col pl-[2px]">
        <header className="relative z-10 flex h-[87px] shrink-0 items-center bg-[#2d6092] pl-[42px] text-white shadow-[0_2px_8px_rgba(0,0,0,0.2)]">
          <div className="flex w-[162px] items-center gap-[2px]">
            <Logo />
            <span className="font-['Liberation_Serif',serif] text-[37px] leading-none">INT</span>
          </div>
          <div className="flex w-[567px] items-center justify-between pt-1">
            {TOOLS.map(([label, shape]) => (
              <button key={label} aria-label={label}>
                <Icon size={22}>{shape}</Icon>
              </button>
            ))}
          </div>
          <button aria-label="Next" className="mr-[39px] ml-auto">
            <svg width="14" height="22" viewBox="0 0 14 22" fill="none" stroke="#fff" strokeWidth="3"><path d="m2 2 9 9-9 9" /></svg>
          </button>
        </header>
        <div className="flex flex-1">
          <Sidebar />
          <main className="flex min-w-0 flex-1 bg-[#fafafa]">
            <div className="grid min-w-0 flex-1 grid-cols-[740fr_941fr] items-start gap-[27px] py-[26px] pl-[25px]">
              <Panel>
                <LogView />
              </Panel>
              <Panel active>
                <CrossPlot />
              </Panel>
            </div>
            <aside className="flex w-[70px] shrink-0 flex-col items-end pt-[26px] pb-7 text-[#3c3c3c]">
              <button aria-label="Tools" className="mr-[19px]"><FaWrench size={23} className="-scale-x-100" /></button>
              <button aria-label="Edit" className="mt-auto flex h-[52px] w-[56px] items-center justify-center rounded-[4px] bg-[#2d6092] text-white">
                <svg width="24" height="24" viewBox="0 0 24 24" fill="none" stroke="currentColor" strokeWidth="2" strokeLinejoin="round"><path d="m2 22 2-7L17 2q2-1 4 1t1 4L9 20zM15 4l5 5M6 17l9-9" /></svg>
              </button>
              <button aria-label="Settings" className="mt-4 mr-[18px]"><FaCog size={24} /></button>
            </aside>
          </main>
        </div>
      </div>
    </div>
  );
}
